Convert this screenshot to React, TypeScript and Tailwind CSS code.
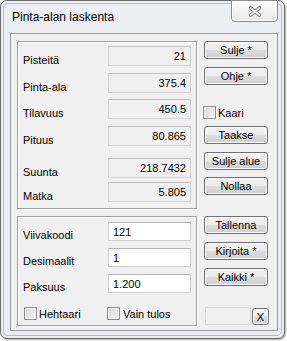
import React from "react";

const font = { fontFamily: '"Liberation Sans", Arial, sans-serif' };

function Btn({ children, className = "" }: { children: React.ReactNode; className?: string }) {
  return (
    <div
      className={`flex h-[18px] w-[64px] items-center justify-center rounded-[3px] border border-[#707070] bg-[linear-gradient(#f3f3f3_0%,#ebebeb_50%,#dddddd_50%,#cfcfcf_100%)] text-[11px] leading-[12px] text-black shadow-[inset_0_0_0_1px_#fbfbfb] ${className}`}
    >
      {children}
    </div>
  );
}

function Check() {
  return (
    <div className="h-[13px] w-[13px] shrink-0 border border-[#8e8f8f] bg-[linear-gradient(135deg,#d6d6d6,#f6f6f6)] shadow-[inset_0_0_0_1px_#f4f4f4]" />
  );
}

function ValRow({ label, value, className = "" }: { label: string; value: string; className?: string }) {
  return (
    <div className={`flex h-[20px] ${className}`}>
      <div className="w-[90px] pl-[5px] pt-[8px] text-[11px] leading-[12px]">{label}</div>
      <div className="flex h-[20px] w-[83px] items-center justify-end border border-[#d2d2d2] border-t-[#c0c0c0] bg-[#f0f0f0] pr-[4px] text-[11px] leading-[12px]">
        {value}
      </div>
    </div>
  );
}

function InRow({ label, value, className = "" }: { label: string; value: string; className?: string }) {
  return (
    <div className={`flex h-[19px] ${className}`}>
      <div className="w-[90px] pl-[5px] pt-[7px] text-[11px] leading-[12px]">{label}</div>
      <div className="flex h-[19px] w-[83px] items-center border border-[#d0d0d0] border-t-[#b4b4b4] bg-white pl-[4px] text-[11px] leading-[12px]">
        {value}
      </div>
    </div>
  );
}

const groupCls =
  "w-[180px] border border-[#a0a0a0] shadow-[inset_1px_1px_0_#ffffff,1px_1px_0_#ffffff]";

export default function App() {
  return (
    <div className="h-[341px] w-[287px] bg-white text-black" style={font}>
      <div className="relative h-[339px] w-[285px] rounded-[7px] border border-[#6a6a6a] bg-[#eceef1] shadow-[1px_1px_2px_rgba(0,0,0,0.35)]">
        <div className="m-[2px] h-[333px] rounded-[5px] border border-[#b8bcc2] pb-[4px] pl-[6px] pr-[3px] pt-[29px]">
          {/* client area */}
          <div className="flex h-[298px] w-[268px] border border-[#9c9c9c] bg-[#f0f0f0]">
            {/* left column */}
            <div className="flex flex-col pl-[6px] pt-[7px]">
              <div className={`${groupCls} h-[168px] pt-[4px]`}>
                <ValRow label="Pisteitä" value="21" />
                <ValRow label="Pinta-ala" value="375.4" className="mt-[7px]" />
                <ValRow label="Tilavuus" value="450.5" className="mt-[6px]" />
                <ValRow label="Pituus" value="80.865" className="mt-[7px]" />
                <ValRow label="Suunta" value="218.7432" className="mt-[12px]" />
                <ValRow label="Matka" value="5.805" className="mt-[4px]" />
              </div>
              <div className={`${groupCls} mt-[7px] h-[110px] pt-[5px]`}>
                <InRow label="Viivakoodi" value="121" />
                <InRow label="Desimaalit" value="1" className="mt-[7px]" />
                <InRow label="Paksuus" value="1.200" className="mt-[7px]" />
                <div className="mt-[14px] flex items-center text-[11px] leading-[12px]">
                  <div className="ml-[6px] flex w-[83px] items-center gap-[2px]">
                    <Check />
                    <span>Hehtaari</span>
                  </div>
                  <div className="flex items-center gap-[3px]">
                    <Check />
                    <span>Vain tulos</span>
                  </div>
                </div>
              </div>
            </div>
            {/* right column */}
            <div className="ml-[7px] flex flex-col">
              <Btn className="mt-[7px]">Sulje *</Btn>
              <Btn className="mt-[8px]">Ohje *</Btn>
              <div className="ml-[-1px] mt-[21px] flex items-center gap-[2px] text-[11px] leading-[12px]">
                <Check />
                <span>Kaari</span>
              </div>
              <Btn className="mt-[7px]">Taakse</Btn>
              <Btn className="mt-[8px]">Sulje alue</Btn>
              <Btn className="mt-[7px]">Nollaa</Btn>
              <Btn className="mt-[21px]">Tallenna</Btn>
              <Btn className="mt-[8px]">Kirjoita *</Btn>
              <Btn className="mt-[8px]">Kaikki *</Btn>
              <div className="mt-[21px] flex items-start">
                <div className="ml-[1px] h-[18px] w-[46px] border border-[#d6d6d6] bg-[#f0f0f0]" />
                <Btn className="ml-[1px] mt-[1px] !h-[17px] !w-[17px]">X</Btn>
              </div>
            </div>
          </div>
        </div>
        {/* title */}
        <div className="absolute left-[11px] top-[9px] text-[12px] leading-[14px]">Pinta-alan laskenta</div>
        {/* close button */}
        <div className="absolute left-[230px] top-[-1px] flex h-[22px] w-[47px] items-center justify-center rounded-b-[4px] border border-[#8d8d8d] bg-[linear-gradient(#fdfdfd,#e9e9e9)] shadow-[inset_0_0_0_1px_#ffffff]">
          <svg width="16" height="13" viewBox="0 0 16 13">
            <line x1="3.5" y1="3" x2="12.5" y2="10" stroke="#7a7a7a" strokeWidth="3.6" strokeLinecap="round" />
            <line x1="12.5" y1="3" x2="3.5" y2="10" stroke="#7a7a7a" strokeWidth="3.6" strokeLinecap="round" />
            <line x1="3.5" y1="3" x2="12.5" y2="10" stroke="#f4f4f4" strokeWidth="1.6" strokeLinecap="round" />
            <line x1="12.5" y1="3" x2="3.5" y2="10" stroke="#f4f4f4" strokeWidth="1.6" strokeLinecap="round" />
          </svg>
        </div>
      </div>
    </div>
  );
}
